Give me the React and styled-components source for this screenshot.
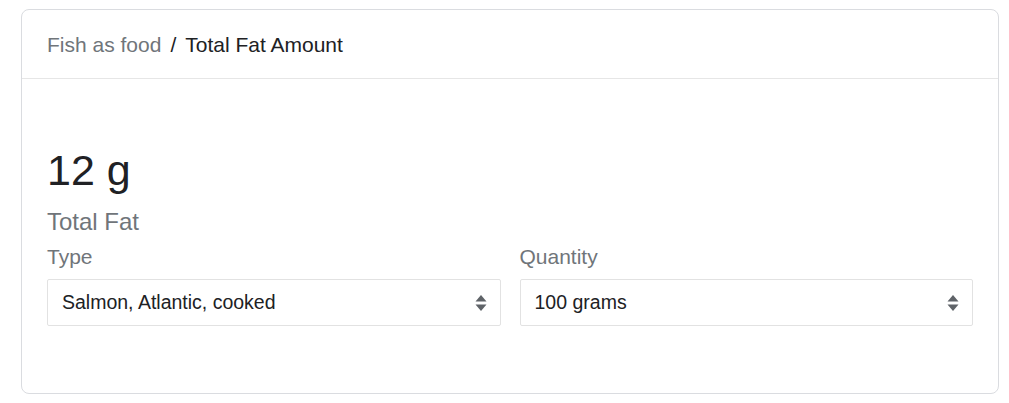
import React, { useState } from 'react';
import styled, { createGlobalStyle } from 'styled-components';

const GlobalStyle = createGlobalStyle`
  body {
    margin: 0;
    background: #fff;
    font-family: "Liberation Sans", Arial, sans-serif;
  }
`;

const Page = styled.div`
  padding: 9px 10px 10px 21px;
`;

const Card = styled.div`
  width: 978px;
  height: 385px;
  box-sizing: border-box;
  border: 1px solid #dadce0;
  border-radius: 8px;
  display: flex;
  flex-direction: column;
`;

const Header = styled.div`
  height: 69px;
  display: flex;
  align-items: center;
  padding: 2px 25px 0;
  box-sizing: border-box;
  border-bottom: 1px solid #e6e6e6;
  font-size: 21px;
`;

const Crumb = styled.span`
  color: ${p => (p.current ? '#202124' : '#70757a')};
`;

const Sep = styled.span`
  color: #202124;
  margin: 0 9px;
`;

const Body = styled.div`
  padding: 65px 25px 0;
`;

const Amount = styled.div`
  font-size: 43px;
  line-height: 52px;
  color: #202124;
`;

const Caption = styled.div`
  font-size: 24px;
  line-height: 28px;
  color: #70757a;
  margin-top: 12px;
`;

const Fields = styled.div`
  display: grid;
  grid-template-columns: 1fr 1fr;
  gap: 19px;
  margin-top: 9px;
`;

const Field = styled.div`
  display: flex;
  flex-direction: column;
`;

const Label = styled.label`
  font-size: 21px;
  line-height: 24px;
  color: #70757a;
  margin-bottom: 10px;
`;

const SelectBox = styled.div`
  position: relative;
  height: 47px;
  box-sizing: border-box;
  border: 1px solid #e2e2e2;
  border-radius: 2px;
  display: flex;
  align-items: center;
  padding: 0 13px 0 14px;
  font-size: 19.5px;
  color: #202124;
`;

const Value = styled.span`
  flex: 1;
`;

const SortIcon = () => (
  <svg width="12" height="18" viewBox="0 0 12 18">
    <path d="M6 1 L11.5 7.5 H0.5 Z" fill="#5f6368" />
    <path d="M6 17 L11.5 10.5 H0.5 Z" fill="#5f6368" />
  </svg>
);

const Select = ({ value }) => (
  <SelectBox>
    <Value>{value}</Value>
    <SortIcon />
  </SelectBox>
);

const App = () => {
  const [type] = useState('Salmon, Atlantic, cooked');
  const [qty] = useState('100 grams');

  return (
    <Page>
      <GlobalStyle />
      <Card>
        <Header>
          <Crumb>Fish as food</Crumb>
          <Sep>/</Sep>
          <Crumb current>Total Fat Amount</Crumb>
        </Header>
        <Body>
          <Amount>12 g</Amount>
          <Caption>Total Fat</Caption>
          <Fields>
            <Field>
              <Label>Type</Label>
              <Select value={type} />
            </Field>
            <Field>
              <Label>Quantity</Label>
              <Select value={qty} />
            </Field>
          </Fields>
        </Body>
      </Card>
    </Page>
  );
};

export default App;
